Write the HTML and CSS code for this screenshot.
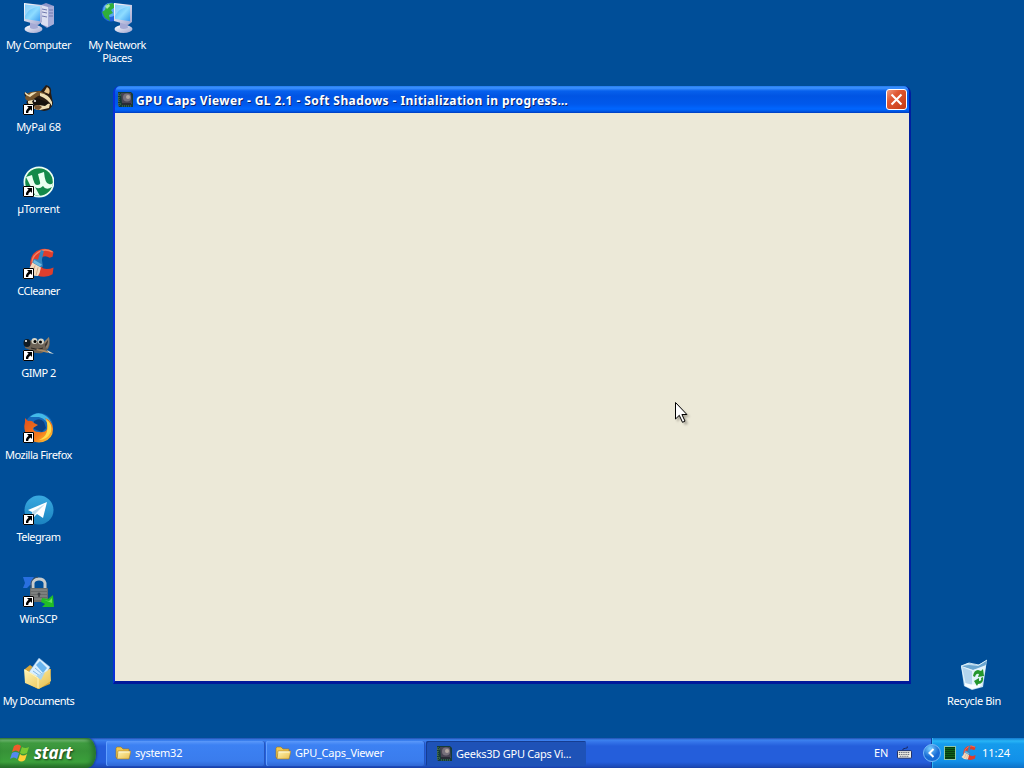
FILE: index.html
```html
<!DOCTYPE html>
<html lang="en">
<head>
<meta charset="utf-8">
<title>Desktop</title>
<link rel="stylesheet" href="styles.css">
</head>
<body>
<svg width="0" height="0" class="defs">
  <defs>
    <linearGradient id="screen" x1="0" y1="0" x2="1" y2="1"><stop offset="0" stop-color="#4eaef5"/><stop offset=".55" stop-color="#8edcff"/><stop offset="1" stop-color="#3d9cf0"/></linearGradient>
    <linearGradient id="silver" x1="0" y1="0" x2="1" y2="1"><stop offset="0" stop-color="#fff"/><stop offset="1" stop-color="#9da3cf"/></linearGradient>
    <linearGradient id="folder" x1="0" y1="0" x2="1" y2="1"><stop offset="0" stop-color="#fff6b8"/><stop offset="1" stop-color="#e8bd49"/></linearGradient>
    <linearGradient id="tg" x1="0" y1="0" x2="0" y2="1"><stop offset="0" stop-color="#39a9e0"/><stop offset="1" stop-color="#1b83c0"/></linearGradient>
    <linearGradient id="fox" x1="0" y1="0" x2="1" y2="1"><stop offset="0" stop-color="#e0501c"/><stop offset=".6" stop-color="#f47a1c"/><stop offset="1" stop-color="#ffd83c"/></linearGradient>
    <symbol id="arrow" viewBox="0 0 11 11"><path fill="#fff" d="M0 0h11v11H0z"/><path fill="none" stroke="#000" d="M.5 .5h10v10H.5z"/><path d="M4 2h5v5L7.6 5.6Q5 7 5.2 9H3Q2.500 6 5.600 3.700z"/></symbol>
    <symbol id="monitor" viewBox="0 0 32 32">
      <ellipse cx="11.500" cy="27" rx="9" ry="4" fill="url(#silver)"/><path d="M8 20h7l1 6q-5 2-8 0z" fill="#a5aad5"/>
      <path d="M2 1l18 2v17l-4 3L2 19z" fill="url(#silver)"/><path d="M3 2.500l15 1.800v15L3 17z" fill="url(#screen)"/><path d="M3 2.500l15 1.800Q7 6 3 14z" fill="#b7e5ff" opacity=".55"/>
    </symbol>
    <symbol id="cc" viewBox="0 0 32 32">
      <path d="M31 4Q24-1 16 2 8 5 7 14q-1 10 7 14 8 4 16-1l1-7q-6 3-11 1-5-4-3-9 4-6 10-2l3-1z" fill="#df3e2c"/>
      <path d="M30 4q-8-4-14 0-7 4-7 11" fill="none" stroke="#f68263" stroke-width="1.500"/>
      <path d="M18 2l3 1-2 9 1 7-4 1-7-5 2-4 4 1z" fill="#3485bd"/><path d="M11 12l8 5-2 2-7-4z" fill="#6fb9df"/>
      <path d="M9 15l9 5q-1 6-3 9-8 0-12-5 4-3 6-9z" fill="#f3dbc0"/><path d="M12 18l-3 8m6-6l-2 8" stroke="#cda783"/>
    </symbol>
    <symbol id="dir" viewBox="0 0 16 16"><path d="M1 3l1-1h4l2 2h6v3H4l-2 6H1z" fill="#f1c850" stroke="#9c7419" stroke-width=".6"/><path d="M3 6h13l-2 8H2z" fill="url(#folder)" stroke="#a47a20" stroke-width=".6"/><path d="M3.500 7h11" stroke="#fffbdc"/></symbol>
    <symbol id="gpu" viewBox="0 0 16 16"><path d="M1 0h13l2 2v13H2L1 13z" fill="#163b35"/><path d="M2 1v13m-1-2h3M1 3h3m-3 3h2m-2 3h2m2 5h10" stroke="#56805c" stroke-dasharray="1 1"/><path d="M4 1h10l1 11H5z" fill="#484453"/><circle cx="10" cy="5.500" r="4" fill="#77717c"/><circle cx="11" cy="5" r="2" fill="#b3a7a2"/><path d="M5 11h9v2H5z" fill="#292b35"/></symbol>
  </defs>
</svg>

<main class="desktop">
  <section class="shortcuts">
    <div class="column">
      <div class="item"><svg class="icon" viewBox="0 0 32 32"><path d="M19 3l5-2 8 3v18l-7 4-6-4z" fill="#8f96c9"/><path d="M19 3l7 2v20l-7-3z" fill="#dcdff1"/><path d="M26 5l6-1v18l-6 3z" fill="#a6add8"/><path d="M20 7l5 1m-5 2l5 1m-5 3l5 1m2-7h4m-4 3h4m-4 3h4" stroke="#7078ae"/><use href="#monitor"/></svg><span>My Computer</span></div>
      <div class="item"><svg class="icon" viewBox="0 0 32 32"><path d="M5 14q-4-3-2-6l4 2q4-3 12-3l5-6q6 1 5 8l2 10q-1 7-9 8l-9-2q-7-3-9-7l3-2z" fill="#281c13"/><path d="M3 14q1-5 6-6l9-1 6 3-8 2-6 4q-5 3-7-2z" fill="#75552d"/><path d="M25 3q4 2 2 7l-5-2z" fill="#e8c58c"/><path d="M4 11q-2-2-1-3l4 3q2-3 8-3l-7 5zm14-2q9 1 12 9v4q-4-7-12-10zM6 17l8-2 6 3 8 2-1 4-9 2q-8 0-12-7z" fill="#efdfb5"/><path d="M10 17l5-3 7 3 5 2-4 3-6-1-5 1z" fill="#17130f"/><path d="M12 22l5-1 3 2-3 3-4-1z" fill="#795633"/><circle cx="13" cy="17" r="1" fill="#fff"/><use href="#arrow" x="1" y="20" width="11" height="11"/></svg><span class="loose">MyPal 68</span></div>
      <div class="item"><svg class="icon" viewBox="0 0 32 32"><circle cx="17" cy="16" r="15.500" fill="#ecfff4"/><circle cx="17" cy="16" r="13.800" fill="#13894a"/><path d="M4 11l6-2q2 10 5 10 4 0 3-3L16 8l6-2q1 12 5 12 2 1 4-1l-1 4q-6 4-9-1-4 4-8 1l5 9-5-1z" fill="#eafff0"/><use href="#arrow" x="1" y="20" width="11" height="11"/></svg><span class="loose">µTorrent</span></div>
      <div class="item"><svg class="icon" viewBox="0 0 32 32"><use href="#cc" x="1" width="32" height="31"/><use href="#arrow" x="1" y="20" width="11" height="11"/></svg><span>CCleaner</span></div>
      <div class="item"><svg class="icon" viewBox="0 0 32 32"><path d="M3 12l7-2 12 2 5-5q2 7-1 12l-6 4q-8 1-12-3l-5-2z" fill="#6c6256"/><path d="M22 12l5-5q1 7-2 12z" fill="#8b8172"/><path d="M23 14l3-4q0 5-3 7z" fill="#3d342f"/><circle cx="12.500" cy="11" r="3" fill="#d5d4c7"/><circle cx="19" cy="11.500" r="3" fill="#d5d4c7"/><circle cx="13" cy="11.500" r="1.500"/><circle cx="18.500" cy="12" r="1.500"/><ellipse cx="5" cy="13" rx="3.500" ry="4" fill="#111b22"/><circle cx="4" cy="11" r="1" fill="#fff"/><path d="M9 18q7 3 12 0" fill="none" stroke="#282421"/><path d="M15 19l12 2-1 2-12-3z" fill="#a98b66"/><path d="M25 20l7 4-5-1z" fill="#dedfd6"/><use href="#arrow" x="1" y="20" width="11" height="11"/></svg><span>GIMP 2</span></div>
      <div class="item"><svg class="icon" viewBox="0 0 32 32"><circle cx="17" cy="15" r="14" fill="#1568ba"/><path d="M8 5q8-7 16-1 7 5 5 13-4-10-12-12z" fill="#42b9e8"/><path d="M12 9q6-4 10 1l2 6-4 4-8-3z" fill="#0b4184"/><path d="M3 6l3 3q4-1 6 2l4 2-5 3q0 4 6 4 6 1 8-3 1-7-2-11 8 3 8 11 0 10-10 13-11 2-16-6-4-7-2-14z" fill="url(#fox)"/><path d="M24 7q7 5 5 13-4 8-12 8 12-5 7-21z" fill="#ffdd4c"/><use href="#arrow" x="1" y="20" width="11" height="11"/></svg><span>Mozilla Firefox</span></div>
      <div class="item"><svg class="icon" viewBox="0 0 32 32"><circle cx="17" cy="16" r="14.500" fill="url(#tg)"/><path d="M6 16l19-8-4 16-6-4-4 4-1-6z" fill="#fff"/><path d="M10 18l13-8-9 9-3 5z" fill="#bddcec"/><use href="#arrow" x="1" y="20" width="11" height="11"/></svg><span>Telegram</span></div>
      <div class="item"><svg class="icon" viewBox="0 0 32 32"><path d="M1 1h11l-2 3 2 6-4-1-3 3H1l2-5z" fill="#286fe0"/><path d="M11 14V7q1-4 6-4t6 4v7" fill="none" stroke="#c8cbcb" stroke-width="3"/><path d="M9 14V7q1-5 7-6" fill="none" stroke="#4b5259"/><rect x="8" y="12" width="18" height="14" rx="1" fill="#696c6b"/><path d="M9 14h16M9 17h16M9 20h16M9 23h16" stroke="#929493"/><circle cx="17" cy="18" r="1.500" fill="#404448"/><path d="M17 17v4" stroke="#404448" stroke-width="1.500"/><path d="M20 22l6 1 5-4 1 12H20l3-3-4-2z" fill="#22bd27"/><path d="M22 24l5 1 3-3v5z" fill="#65e45a"/><use href="#arrow" x="1" y="20" width="11" height="11"/></svg><span class="loose">WinSCP</span></div>
      <div class="item"><svg class="icon" viewBox="0 0 32 32"><path d="M3 11l5-4 4 3 17 1-1 15-12 5-13-7z" fill="#d8a638"/><path d="M7 14L17 0l11 9-9 17z" fill="#d8efff" stroke="#78a5d4" stroke-width=".5"/><path d="M14 7l4-4 7 7-4 5z" fill="#69b4ee"/><path d="M11 13l7 5m-5-8l7 6" stroke="#82b7e3"/><path d="M2 11l14 8 12-8 1 12-12 8-14-6z" fill="url(#folder)"/><path d="M14 18l9-4-4 8z" fill="#a9d4ef"/><path d="M3 12l13 8v10" fill="none" stroke="#fff5ba"/></svg><span>My Documents</span></div>
    </div>
    <div class="column second">
      <div class="item"><svg class="icon" viewBox="0 0 32 32"><circle cx="10" cy="10" r="9.500" fill="#2263dc"/><circle cx="9" cy="8" r="7" fill="#5aa9f2"/><path d="M6 2l6-1 2 4-4 3 2 3-4 2 1 6-5-3-3-6 3-2z" fill="#2fae3b"/><path d="M4 4l4-2 1 2-3 3z" fill="#a9e9a0"/><use href="#monitor" x="11" y="0" width="32" height="32"/></svg><span>My Network<br>Places</span></div>
    </div>
    <div class="column trash">
      <div class="item"><svg class="icon" viewBox="0 0 32 32"><path d="M3 8l7-3 10 2 9-5-4 27-11 3-8-4z" fill="#bddcf0"/><path d="M3 8l8-1 9 1 9-6-2 7-12 3z" fill="#6aa6d0"/><path d="M3 8l12 4 13-5-4 21-10 3-7-4z" fill="#e2f3fc"/><path d="M4 9l10 4v17l-6-3z" fill="#b5d5ed"/><path d="M7 25q9 3 16 1l-1 3-8 2-7-3z" fill="#f8fdff"/><path d="M3 8l8-3 10 2 8-5" fill="none" stroke="#edfcff" stroke-width=".8"/><path d="M15 18q1-6 5-6l3 1 2-2 1 7-6 1 1-3q-3-1-4 3zm10 1q1 7-5 7l-1 2-3-5 5-3v3q3 0 2-3z" fill="#24962d"/></svg><span>Recycle Bin</span></div>
    </div>
  </section>

  <section class="window">
    <header class="titlebar"><svg class="small" viewBox="0 0 16 16"><use href="#gpu"/></svg><h1>GPU Caps Viewer - GL 2.1 - Soft Shadows - Initialization in progress…</h1><button class="close" aria-label="Close"><svg viewBox="0 0 21 21"><path d="M5 5l11 11m0-11l-11 11"/></svg></button></header>
    <div class="client"></div>
  </section>
  <svg class="cursor" viewBox="0 0 16 24"><path class="shade" d="M2 3v17l4-4 4 7 3-1-3-7h5z"/><path d="M.5 .5v16.500l3.800-3.700 3.200 7 2.500-1.200-3.100-6.600h5z" fill="#fff" stroke="#000"/></svg>
</main>

<footer class="taskbar">
  <button class="start"><svg viewBox="0 0 20 20"><path d="M4 3q4-3 7 0L9 9Q6 6 2 9z" fill="#f05b2b"/><path d="M12 4q3 2 7 0l-2 6q-4 2-7 0z" fill="#78c933"/><path d="M2 10q3-2 7 0l-2 6q-3-3-7 0z" fill="#5489f0"/><path d="M10 11q3 3 7 0l-2 6q-4 3-7 0z" fill="#ffcf35"/></svg><span>start</span></button>
  <nav class="tasks">
    <button class="task"><svg class="small" viewBox="0 0 16 16"><use href="#dir"/></svg><span>system32</span></button>
    <button class="task"><svg class="small" viewBox="0 0 16 16"><use href="#dir"/></svg><span>GPU_Caps_Viewer</span></button>
    <button class="task active"><svg class="small" viewBox="0 0 16 16"><use href="#gpu"/></svg><span>Geeks3D GPU Caps Vi...</span></button>
  </nav>
  <div class="language"><span>EN</span><svg viewBox="0 0 16 14"><path d="M6 4q0-2 3-2t2-2" fill="none" stroke="#17255c"/><rect x=".5" y="4.500" width="15" height="8" rx="1" fill="#f2f1e8" stroke="#17255c"/><path d="M2 6.500h12M2 8.500h12M3 10.500h10" stroke="#252b45" stroke-dasharray="1 1"/></svg></div>
  <div class="tray">
    <svg class="chevron" viewBox="0 0 18 18"><defs><radialGradient id="ball" cx=".4" cy=".25"><stop stop-color="#79ceff"/><stop offset="1" stop-color="#176bd5"/></radialGradient></defs><circle cx="9" cy="9" r="8.500" fill="url(#ball)" stroke="#75b9f5"/><path d="M10.500 5L6.500 9l4 4" fill="none" stroke="#fff" stroke-width="2"/></svg>
    <svg class="meter" viewBox="0 0 12 14"><path d="M0 0h12v14H0z" fill="#90c8a8"/><path d="M1 1h10v12H1z" fill="#073b11"/><path d="M2 2v10m2-10v10m2-10v10m2-10v10m2-10v10" stroke="#168621" stroke-dasharray="1 1"/></svg>
    <svg class="broom" viewBox="0 0 32 32"><use href="#cc"/></svg>
    <time>11:24</time>
  </div>
</footer>
</body>
</html>
```
FILE: styles.css
```css
* { box-sizing: border-box; }
body { margin: 0; width: 1024px; height: 768px; overflow: hidden; display: flex; flex-direction: column; background: #004e98; color: #fff; font: 11px/13px "Noto Sans", Tahoma, sans-serif; }
button { border: 0; padding: 0; color: inherit; font: inherit; }
svg { display: block; flex: none; }
.defs { position: absolute; }
.desktop { position: relative; height: 738px; }
.shortcuts { display: flex; height: 100%; padding-top: 2px; }
.column { width: 77px; }
.second { width: 80px; }
.trash { width: 100px; margin-left: auto; padding-top: 656px; }
.item { height: 82px; display: flex; flex-direction: column; align-items: center; gap: 4px; text-align: center; white-space: nowrap; letter-spacing: -.5px; }
.loose { letter-spacing: -.25px; }
.icon { width: 32px; height: 32px; margin-right: 1px; }
.trash .item { letter-spacing: -.35px; }
.window { position: absolute; left: 113px; top: 86px; width: 798px; height: 598px; display: flex; flex-direction: column; border: solid #0831d9; border-color: #0831d9 #001ea0 #001a9a #0831d9; border-width: 0 2px 3px; border-radius: 7px 7px 0 0; overflow: hidden; background: #0055e5; }
.titlebar { height: 27px; display: flex; align-items: center; gap: 3px; padding: 0 2px 0 2px; background: linear-gradient(#237bee 0, #3d93ff 2px, #0760ec 5px, #0054e3 10px, #0058eb 18px, #0066ff 23px, #005bea 25px, #003bbd 27px); }
.small { width: 16px; height: 16px; }
h1 { margin: 0; padding-top: 2px; font: bold 12px/16px "Noto Sans", sans-serif; letter-spacing: .42px; white-space: nowrap; text-shadow: 1px 1px #0a246a; }
.close { width: 21px; height: 21px; margin-left: auto; border: 1px solid #fff; border-radius: 3px; background: linear-gradient(135deg, #f09b80, #df5732 35%, #c53912); }
.close svg { width: 19px; height: 19px; }
.close path { stroke: #fff; stroke-width: 2.3; }
.client { flex: 1; background: #ece9d8; }
.cursor { position: absolute; left: 675px; top: 402px; width: 16px; height: 24px; overflow: visible; }
.shade { fill: #504d45; opacity: .4; filter: blur(1px); }
.taskbar { height: 30px; display: flex; background: linear-gradient(#1f4fae 0, #3c82ef 2px, #3474e9 4px, #245edb 8px, #245edb 24px, #1b48b5 29px, #193da3); }
.start { width: 96px; display: flex; align-items: center; gap: 4px; padding-left: 10px; border-radius: 0 9px 9px 0 / 0 15px 15px 0; background: linear-gradient(#337d36, #75bb75 2px, #3f9b40 5px, #379238 13px, #3ba03b 24px, #256b27); box-shadow: inset -3px 0 5px #24702b, 1px 0 2px #173a93; }
.start svg { width: 20px; height: 20px; }
.start span { font: italic bold 17px/24px "Open Sans", sans-serif; letter-spacing: -.2px; text-shadow: 1px 1px 2px #173d19; }
.tasks { display: flex; gap: 1px; padding: 3px 0 2px 10px; }
.task { width: 159px; display: flex; align-items: center; gap: 4px; padding: 0 0 2px 9px; border-radius: 2px; background: linear-gradient(#5b99fa, #3c81f3 4px, #3a7ced 20px, #3068d5); box-shadow: inset 1px 0 #62a0ff, inset -1px 0 #2557bf; letter-spacing: -.25px; }
.active { width: 160px; padding: 0 0 0 10px; background: #1e52b7; box-shadow: inset 1px 1px #153d91; }
.language { margin-left: auto; display: flex; align-items: center; gap: 9px; width: 58px; }
.language span { padding-bottom: 1px; }
.language svg { width: 15px; height: 14px; }
.tray { width: 92px; display: flex; align-items: center; background: linear-gradient(#1478cf, #28b5f6 3px, #159bec 6px, #1290e9 23px, #0d71c7); box-shadow: -1px 0 #123e9e, inset 1px 0 #30b8f5; }
.chevron { width: 18px; height: 18px; margin-left: -9px; }
.meter { width: 12px; height: 14px; margin-left: 3px; }
.broom { width: 16px; height: 16px; margin-left: 4px; }
.tray time { margin-left: 6px; padding-bottom: 1px; }
```
